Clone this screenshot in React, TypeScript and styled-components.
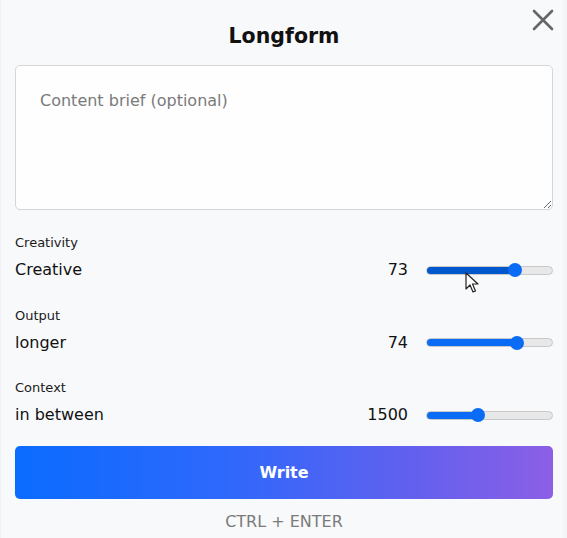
import React from "react";
import styled, { createGlobalStyle } from "styled-components";

const Global = createGlobalStyle`
  html, body { margin: 0; padding: 0; background: #f8f9fb; }
  body { font-family: "DejaVu Sans", Verdana, sans-serif; color: #111; }
  * { box-sizing: border-box; }
`;

const Panel = styled.div`
  position: relative;
  width: 567px;
  height: 538px;
  padding: 0 14px 0 15px;
  display: flex;
  flex-direction: column;
  background: #f8f9fb;
  box-shadow: inset 1px 0 0 #f0f1f3, inset -4px 0 0 #f3f4f6;
`;

const Title = styled.h1`
  margin: 24px 0 17px;
  font-size: 20.5px;
  line-height: 24px;
  font-weight: bold;
  text-align: center;
  color: #111;
`;

const CloseButton = styled.button`
  position: absolute;
  top: 8px;
  right: 12px;
  width: 24px;
  height: 24px;
  padding: 0;
  border: none;
  background: none;
  display: flex;
  align-items: center;
  justify-content: center;
  cursor: pointer;
`;

const Brief = styled.textarea`
  display: block;
  width: 100%;
  height: 145px;
  margin: 0;
  padding: 25px 24px;
  border: 1px solid #d4d6d9;
  border-radius: 5px;
  background: #fefefe;
  font-family: "DejaVu Sans", Verdana, sans-serif;
  font-size: 16px;
  line-height: 20px;
  color: #333;
  resize: vertical;
  outline: none;
  &::placeholder { color: #7a7a7a; }
`;

const Sections = styled.div`
  display: flex;
  flex-direction: column;
  gap: 26.5px;
  margin-top: 25px;
`;

const Section = styled.div`
  display: flex;
  flex-direction: column;
  gap: 8px;
`;

const Label = styled.div`
  font-size: 13px;
  line-height: 16px;
  color: #1a1a1a;
`;

const Row = styled.div`
  display: flex;
  align-items: center;
  height: 22px;
`;

const RowName = styled.div`
  flex: 1;
  font-size: 16px;
  line-height: 20px;
  color: #111;
`;

const Value = styled.div`
  font-size: 16px;
  line-height: 20px;
  color: #111;
  text-align: right;
  margin-right: 18px;
`;

const SliderWrap = styled.div`
  position: relative;
  width: 127px;
  height: 14px;
  display: flex;
  align-items: center;
`;

const Track = styled.div`
  position: relative;
  width: 100%;
  height: 9px;
  border-radius: 5px;
  background: #e8e8e8;
  border: 1px solid #c9c9c9;
  overflow: hidden;
`;

const Fill = styled.div<{ $active?: boolean }>`
  position: absolute;
  left: -1px;
  top: -1px;
  bottom: -1px;
  border-radius: 5px;
  background: ${(p) => (p.$active ? "#0058cc" : "#0a6cf5")};
`;

const Thumb = styled.div`
  position: absolute;
  top: 0;
  width: 14px;
  height: 14px;
  margin-left: -7px;
  border-radius: 50%;
  background: #0a6cf5;
`;

const WriteButton = styled.button`
  margin-top: 20px;
  width: 100%;
  height: 53px;
  border: none;
  border-radius: 5px;
  background: linear-gradient(90deg, #0a6cff 0%, #2f68fb 40%, #6460ee 75%, #8c5fe6 100%);
  color: #fff;
  font-family: "DejaVu Sans", Verdana, sans-serif;
  font-weight: bold;
  font-size: 16px;
  cursor: pointer;
`;

const Hint = styled.div`
  margin-top: 13px;
  text-align: center;
  font-size: 16px;
  line-height: 19px;
  color: #7a7a7a;
`;

const Pointer = styled.svg`
  position: absolute;
  left: 465px;
  top: 272px;
  pointer-events: none;
`;

function Slider({ fraction, active }: { fraction: number; active?: boolean }) {
  const center = 7 + (127 - 14) * fraction;
  return (
    <SliderWrap>
      <Track>
        <Fill $active={active} style={{ width: center + 1 }} />
      </Track>
      <Thumb style={{ left: center }} />
    </SliderWrap>
  );
}

const settings = [
  { label: "Creativity", name: "Creative", value: "73", fraction: 0.73, active: true },
  { label: "Output", name: "longer", value: "74", fraction: 0.74 },
  { label: "Context", name: "in between", value: "1500", fraction: 0.4 },
];

export default function App() {
  return (
    <>
      <Global />
      <Panel>
        <Title>Longform</Title>
        <CloseButton aria-label="Close">
          <svg width="22" height="22" viewBox="0 0 22 22">
            <path d="M2 2 L20 20 M20 2 L2 20" stroke="#666" strokeWidth="2.6" strokeLinecap="round" />
          </svg>
        </CloseButton>
        <Brief placeholder="Content brief (optional)" />
        <Sections>
          {settings.map((s) => (
            <Section key={s.label}>
              <Label>{s.label}</Label>
              <Row>
                <RowName>{s.name}</RowName>
                <Value>{s.value}</Value>
                <Slider fraction={s.fraction} active={s.active} />
              </Row>
            </Section>
          ))}
        </Sections>
        <WriteButton>Write</WriteButton>
        <Hint>CTRL + ENTER</Hint>
        <Pointer width="14" height="22" viewBox="0 0 14 22">
          <path d="M1 1 L1 17 L5 13 L8 20 L10.5 19 L7.5 12 L13 12 Z" fill="#fff" stroke="#222" strokeWidth="1.2" strokeLinejoin="round" />
        </Pointer>
      </Panel>
    </>
  );
}
